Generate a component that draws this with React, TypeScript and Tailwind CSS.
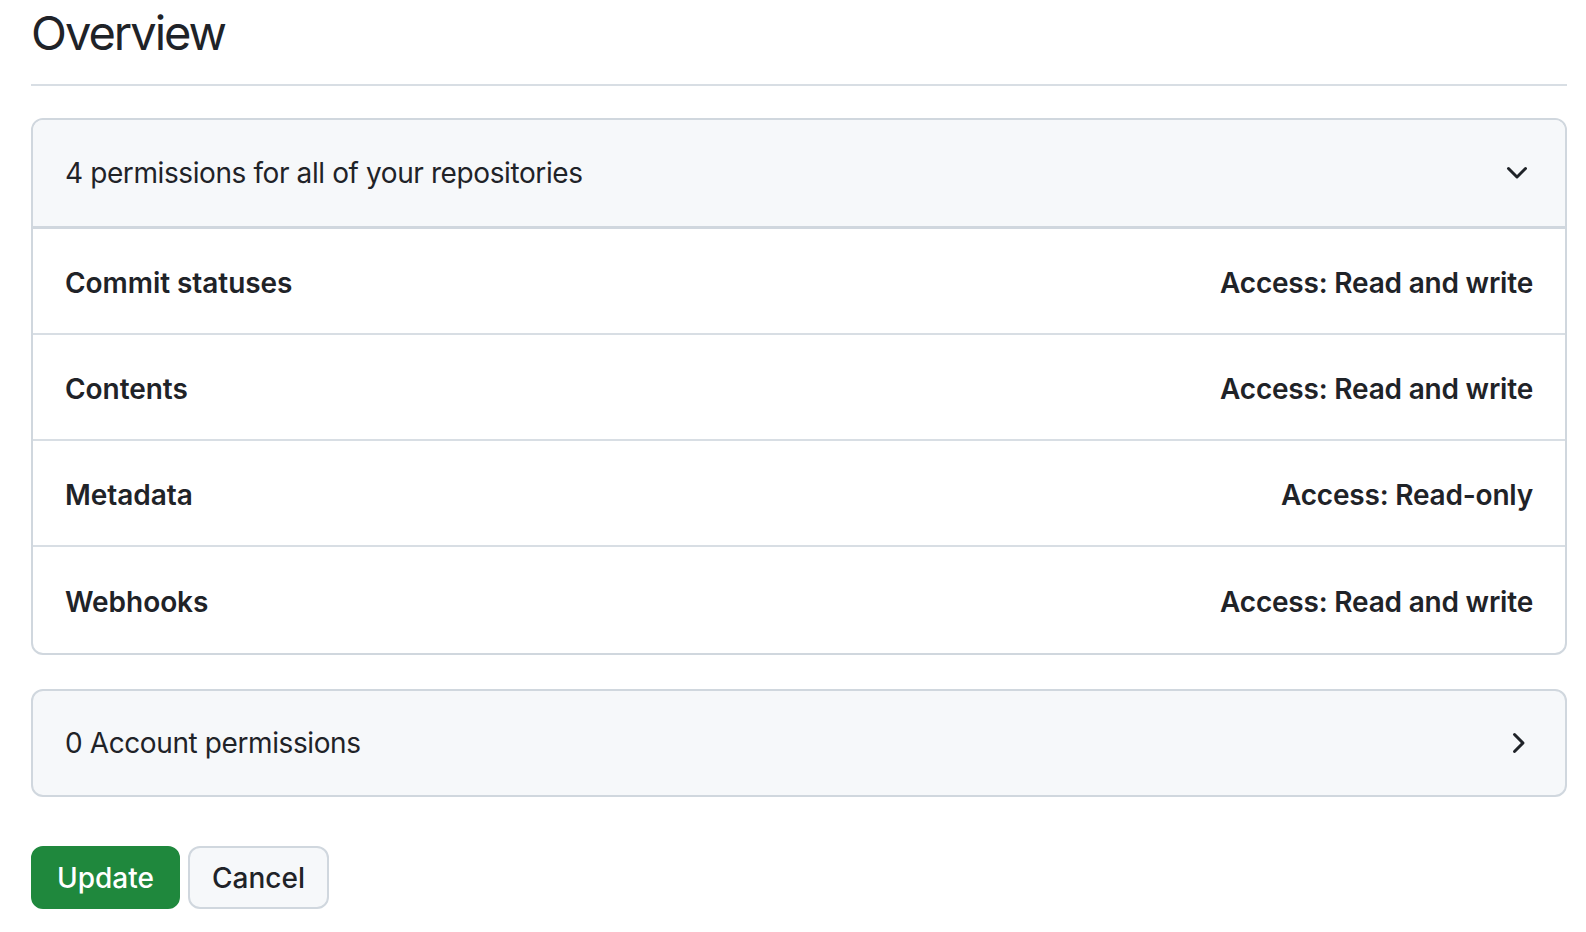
import React from "react";

function ChevronDown() {
  return (
    <svg width="32" height="32" viewBox="0 0 16 16" fill="#1f2328" aria-hidden="true">
      <path d="M12.78 5.22a.749.749 0 0 1 0 1.06l-4.25 4.25a.749.749 0 0 1-1.06 0L3.22 6.28a.749.749 0 1 1 1.06-1.06L8 8.939l3.72-3.719a.749.749 0 0 1 1.06 0Z" />
    </svg>
  );
}

function ChevronRight() {
  return (
    <svg width="32" height="32" viewBox="0 0 16 16" fill="#1f2328" aria-hidden="true">
      <path d="M6.22 3.22a.75.75 0 0 1 1.06 0l4.25 4.25a.75.75 0 0 1 0 1.06l-4.25 4.25a.751.751 0 0 1-1.042-.018.751.751 0 0 1-.018-1.042L9.94 8 6.22 4.28a.75.75 0 0 1 0-1.06Z" />
    </svg>
  );
}

const rows = [
  { name: "Commit statuses", access: "Access: Read and write" },
  { name: "Contents", access: "Access: Read and write" },
  { name: "Metadata", access: "Access: Read-only" },
  { name: "Webhooks", access: "Access: Read and write" },
];

export default function App() {
  return (
    <div className="w-[1586px] h-[932px] overflow-hidden bg-white pl-[31px] pr-[19px] font-['Inter','Liberation_Sans',sans-serif] text-[#1f2328]">
      <div className="pt-[3px] pb-[21px] border-b-2 border-[#d8dee4]">
        <h2 className="text-[47px] leading-[60px] font-normal tracking-[-2px]">Overview</h2>
      </div>

      <div className="mt-[32px] rounded-[12px] border-2 border-[#d0d7de] overflow-hidden">
        <div className="flex items-center justify-between bg-[#f6f8fa] px-[32px] py-[32px] border-b-[3px] border-[#d0d7de]">
          <span className="text-[28px] leading-[42px] tracking-[-0.4px]">4 permissions for all of your repositories</span>
          <ChevronDown />
        </div>
        {rows.map((r, i) => (
          <div
            key={r.name}
            className={
              i < rows.length - 1
                ? "flex items-center justify-between px-[32px] pt-[34px] pb-[30px] border-b-2 border-[#d8dee4]"
                : "flex items-center justify-between px-[32px] pt-[35px] pb-[31px]"
            }
          >
            <span className="text-[28px] leading-[40px] font-semibold tracking-[-0.05px]">{r.name}</span>
            <span className="text-[28px] leading-[40px] font-semibold tracking-[-0.2px]">{r.access}</span>
          </div>
        ))}
      </div>

      <div className="mt-[34px] rounded-[12px] border-2 border-[#d0d7de] bg-[#f6f8fa] flex items-center justify-between px-[32px] py-[32px]">
        <span className="text-[28px] leading-[40px] tracking-[-0.4px]">0 Account permissions</span>
        <ChevronRight />
      </div>

      <div className="mt-[49px] flex gap-[8px]">
        <button className="h-[63px] w-[149px] rounded-[12px] bg-[#1f883d] border-2 border-[#1f883d] text-white text-[28px] font-medium flex items-center justify-center">
          Update
        </button>
        <button className="h-[63px] w-[141px] rounded-[12px] bg-[#f6f8fa] border-2 border-[#d0d7de] text-[#1f2328] text-[28px] font-medium flex items-center justify-center">
          Cancel
        </button>
      </div>
    </div>
  );
}
